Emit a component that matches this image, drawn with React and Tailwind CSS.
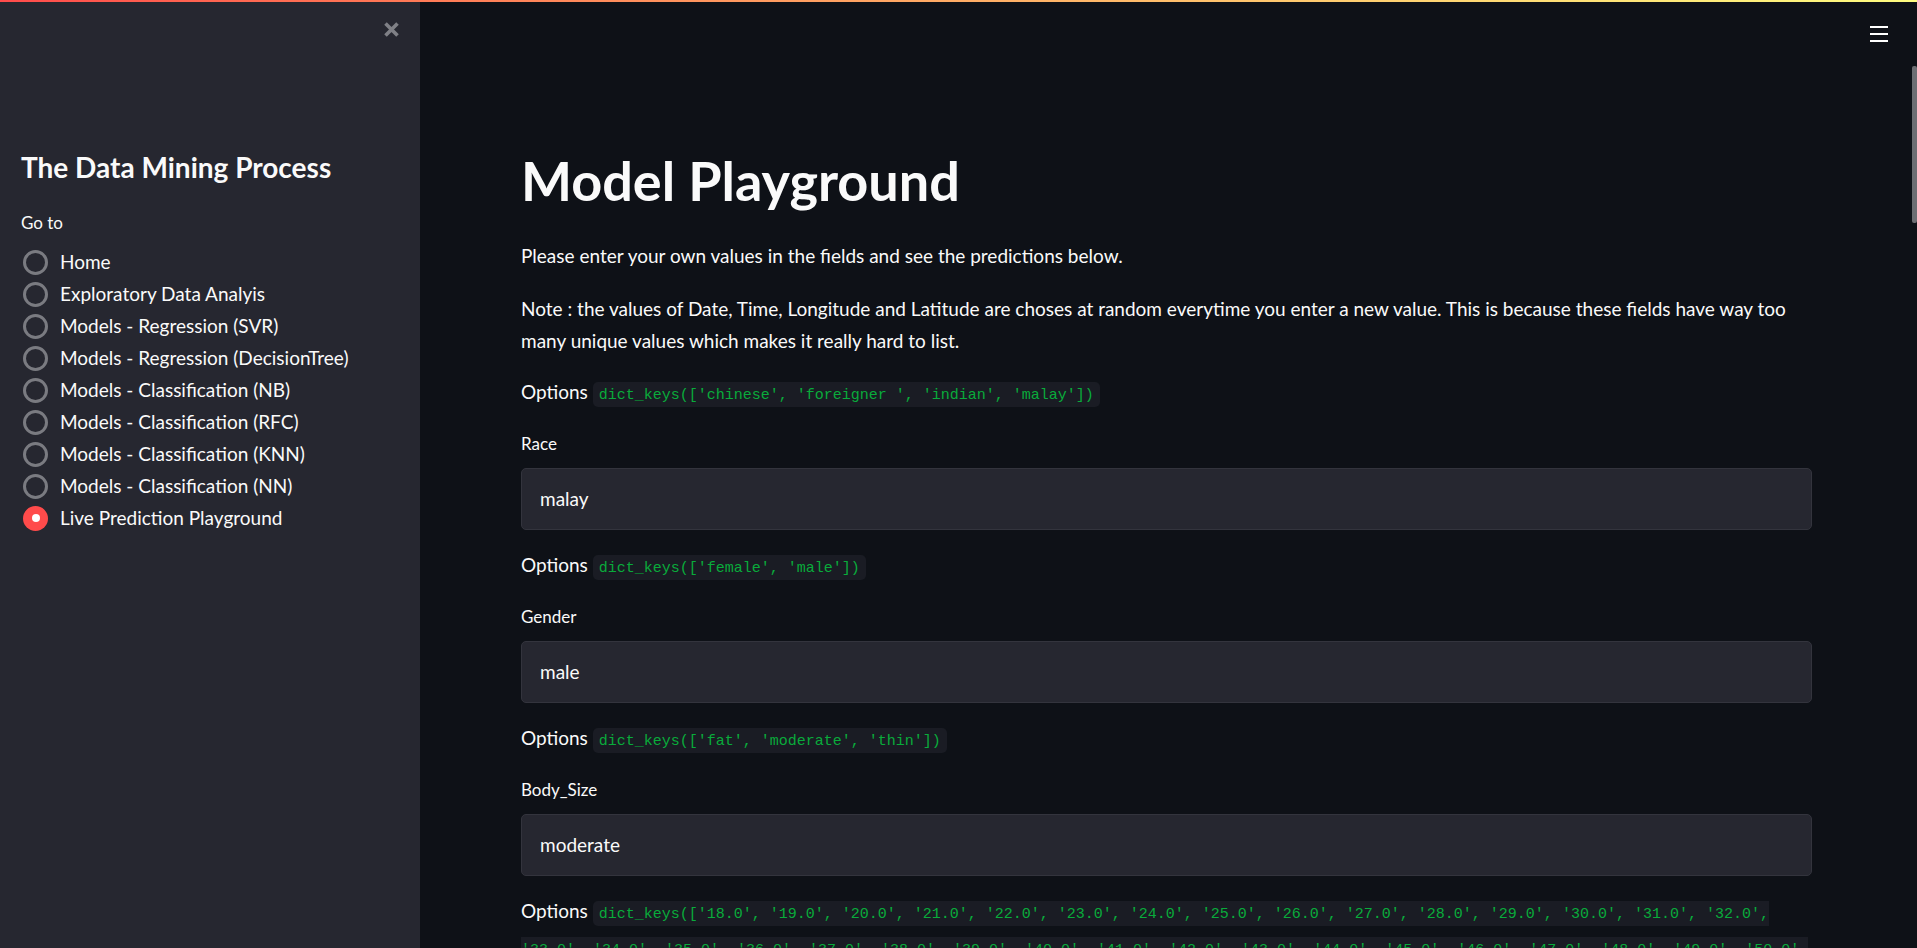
import React from "react";

const pages = [
  "Home",
  "Exploratory Data Analyis",
  "Models - Regression (SVR)",
  "Models - Regression (DecisionTree)",
  "Models - Classification (NB)",
  "Models - Classification (RFC)",
  "Models - Classification (KNN)",
  "Models - Classification (NN)",
  "Live Prediction Playground",
];

const fields = [
  { options: "dict_keys(['chinese', 'foreigner ', 'indian', 'malay'])", label: "Race", value: "malay" },
  { options: "dict_keys(['female', 'male'])", label: "Gender", value: "male" },
  { options: "dict_keys(['fat', 'moderate', 'thin'])", label: "Body_Size", value: "moderate" },
];

const ages = [];
for (let a = 18; a <= 62; a++) ages.push(`'${a}.0'`);
const ageKeys = `dict_keys([${ages.join(", ")}])`;

function Code({ children }) {
  return (
    <code className="font-['Liberation_Mono',monospace] text-[15px] text-[#09ab3b] bg-[#1a1c24] rounded-[5px] px-[6px] pt-[5px] pb-[3px]">
      {children}
    </code>
  );
}

function Radio({ label, checked }) {
  return (
    <div className="flex items-center h-[32px]">
      {checked ? (
        <span className="ml-[2px] w-[25px] h-[25px] rounded-full bg-[#ff4b4b] flex items-center justify-center shrink-0">
          <span className="w-[8px] h-[8px] rounded-full bg-white" />
        </span>
      ) : (
        <span className="ml-[2px] w-[25px] h-[25px] rounded-full border-[3px] border-[#7a7b81] shrink-0" />
      )}
      <span className="ml-[12px] text-[19px] leading-[32px] whitespace-nowrap">{label}</span>
    </div>
  );
}

export default function App() {
  return (
    <div className="relative h-screen w-full overflow-hidden bg-[#0e1117] text-[#fafafa] font-[Lato,sans-serif]">
      <div className="absolute top-0 inset-x-0 h-[2px] bg-linear-to-r from-[#ff4b4b] to-[#fffd80] z-10" />
      <div className="flex h-full">
        {/* Sidebar */}
        <aside className="w-[420px] shrink-0 bg-[#262730] pl-[21px] pr-[20px]">
          <div className="flex justify-end pt-[21px]">
            <svg width="17" height="17" viewBox="0 0 17 17">
              <path d="M2.5 2.5 L14.5 14.5 M14.5 2.5 L2.5 14.5" stroke="#7f8086" strokeWidth="3.6" />
            </svg>
          </div>
          <h2 className="mt-[111px] h-[36px] leading-[36px] text-[28px] font-bold whitespace-nowrap">
            The Data Mining Process
          </h2>
          <div className="mt-[26px] h-[24px] leading-[24px] text-[17px]">Go to</div>
          <div className="mt-[11px] flex flex-col">
            {pages.map((p, i) => (
              <Radio key={p} label={p} checked={i === pages.length - 1} />
            ))}
          </div>
        </aside>

        {/* Main */}
        <main className="relative flex-1 pl-[101px] pr-[105px]">
          <div className="absolute top-[26px] right-[29px] flex flex-col gap-[5px]">
            <span className="block w-[18px] h-[2px] bg-white" />
            <span className="block w-[18px] h-[2px] bg-white" />
            <span className="block w-[18px] h-[2px] bg-white" />
          </div>
          <div className="absolute right-0 top-[66px] w-[5px] h-[157px] rounded-[2px] bg-[#6d6e73]" />

          <h1 className="mt-[148px] h-[66px] leading-[66px] text-[54px] font-bold whitespace-nowrap">
            Model Playground
          </h1>
          <p className="mt-[26px] text-[19px] leading-[32px]">
            Please enter your own values in the fields and see the predictions below.
          </p>
          <p className="mt-[21px] text-[19px] leading-[32px]">
            Note : the values of Date, Time, Longitude and Latitude are choses at random everytime you enter a new
            value. This is because these fields have way too
            <br />
            many unique values which makes it really hard to list.
          </p>

          <div className="mt-[19px]">
            {fields.map((f) => (
              <div key={f.label}>
                <p className="h-[32px] text-[19px] leading-[32px] whitespace-nowrap">
                  Options <Code>{f.options}</Code>
                </p>
                <div className="mt-[24px] h-[24px] leading-[24px] text-[17px]">{f.label}</div>
                <div className="mt-[12px] h-[62px] flex items-center rounded-[5px] bg-[#262730] border border-[#33343d] pl-[18px] text-[19px]">
                  {f.value}
                </div>
                <div className="h-[19px]" />
              </div>
            ))}
            <p className="text-[19px] leading-[32px]">
              Options <Code>{ageKeys}</Code>
            </p>
          </div>
        </main>
      </div>
    </div>
  );
}
